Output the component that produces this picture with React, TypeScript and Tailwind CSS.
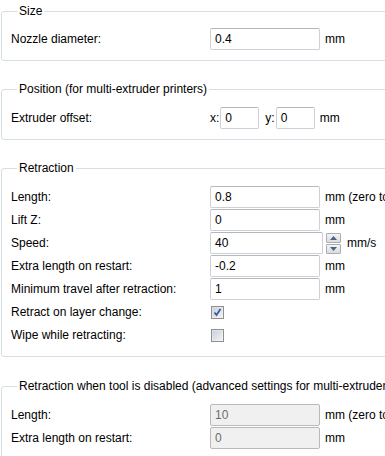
import React from 'react';

const font = { fontFamily: '"Liberation Sans", Arial, sans-serif' };

function Group({ title, className, children }: { title: string; className?: string; children: React.ReactNode }) {
    return (
        <fieldset className={`w-[520px] border border-[#d5dfe5] rounded-[3px] pl-[9px] pb-[9px] ${className ?? ''}`}>
            <legend className="ml-[6px] px-[2px] leading-[14px] whitespace-nowrap text-black">{title}</legend>
            {children}
        </fieldset>
    );
}

function Field({ value, disabled, w = 'w-[110px]' }: { value: string; disabled?: boolean; w?: string }) {
    return (
        <div
            className={`${w} h-[22px] rounded-[2px] border flex items-center px-[4px] ${
                disabled ? 'bg-[#f0f0f0] border-[#b9b9b9] text-[#6d6d6d]' : 'bg-white border-[#cdd0d4] border-t-[#b4b8be] text-black'
            }`}
        >
            {value}
        </div>
    );
}

function Row({ label, children }: { label: string; children: React.ReactNode }) {
    return (
        <div className="flex items-center h-[22px] mb-[1px] whitespace-nowrap">
            <div className="w-[199px] shrink-0">{label}</div>
            {children}
        </div>
    );
}

function Unit({ text }: { text: string }) {
    return <span className="ml-[5px]">{text}</span>;
}

function Check({ checked }: { checked?: boolean }) {
    return (
        <span className="ml-[1px] w-[13px] h-[13px] border border-[#8f8f8f] bg-gradient-to-br from-[#dcdcdc] to-[#f7f7f7] flex items-center justify-center">
            <span className="w-[9px] h-[9px] bg-gradient-to-br from-[#c9d2de] to-[#eef1f5] flex items-center justify-center">
                {checked && (
                    <svg width="9" height="9" viewBox="0 0 9 9">
                        <path d="M1.5 4.5 L3.5 7 L7.5 1" fill="none" stroke="#3d5a98" strokeWidth="1.8" />
                    </svg>
                )}
            </span>
        </span>
    );
}

function Spin() {
    return (
        <div className="ml-[3px] flex flex-col gap-[1px]">
            {[0, 1].map((i) => (
                <div
                    key={i}
                    className="w-[15px] h-[10px] border border-[#a9aeb5] rounded-[1px] bg-gradient-to-b from-[#f4f4f4] to-[#dcdcdc] flex items-center justify-center"
                >
                    <svg width="7" height="4" viewBox="0 0 7 4">
                        <path d={i === 0 ? 'M0 4 L3.5 0 L7 4 Z' : 'M0 0 L3.5 4 L7 0 Z'} fill="#4d6185" />
                    </svg>
                </div>
            ))}
        </div>
    );
}

export default function App() {
    return (
        <div className="w-[385px] h-[456px] overflow-hidden bg-white text-[12px] pl-[1px] pt-[4px]" style={font}>
            {/* Size */}
            <Group title="Size">
                <div className="mt-[10px]">
                    <Row label="Nozzle diameter:">
                        <Field value="0.4" />
                        <Unit text="mm" />
                    </Row>
                </div>
            </Group>

            {/* Position */}
            <Group title="Position (for multi-extruder printers)" className="mt-[21px]">
                <div className="mt-[11px]">
                    <Row label="Extruder offset:">
                        <span className="mr-[1px]">x:</span>
                        <Field value="0" w="w-[39px]" />
                        <span className="ml-[6px] mr-[1px]">y:</span>
                        <Field value="0" w="w-[39px]" />
                        <Unit text="mm" />
                    </Row>
                </div>
            </Group>

            {/* Retraction */}
            <Group title="Retraction" className="mt-[21px]">
                <div className="mt-[11px]">
                    <Row label="Length:">
                        <Field value="0.8" />
                        <Unit text="mm (zero to disable)" />
                    </Row>
                    <Row label="Lift Z:">
                        <Field value="0" />
                        <Unit text="mm" />
                    </Row>
                    <Row label="Speed:">
                        <Field value="40" w="w-[113px]" />
                        <Spin />
                        <span className="ml-[6px]">mm/s</span>
                    </Row>
                    <Row label="Extra length on restart:">
                        <Field value="-0.2" />
                        <Unit text="mm" />
                    </Row>
                    <Row label="Minimum travel after retraction:">
                        <Field value="1" />
                        <Unit text="mm" />
                    </Row>
                    <Row label="Retract on layer change:">
                        <Check checked />
                    </Row>
                    <Row label="Wipe while retracting:">
                        <Check />
                    </Row>
                </div>
            </Group>

            {/* Retraction when tool disabled */}
            <Group title="Retraction when tool is disabled (advanced settings for multi-extruder setups)" className="mt-[22px]">
                <div className="mt-[11px]">
                    <Row label="Length:">
                        <Field value="10" disabled />
                        <Unit text="mm (zero to disable)" />
                    </Row>
                    <Row label="Extra length on restart:">
                        <Field value="0" disabled />
                        <Unit text="mm" />
                    </Row>
                </div>
            </Group>
        </div>
    );
}
